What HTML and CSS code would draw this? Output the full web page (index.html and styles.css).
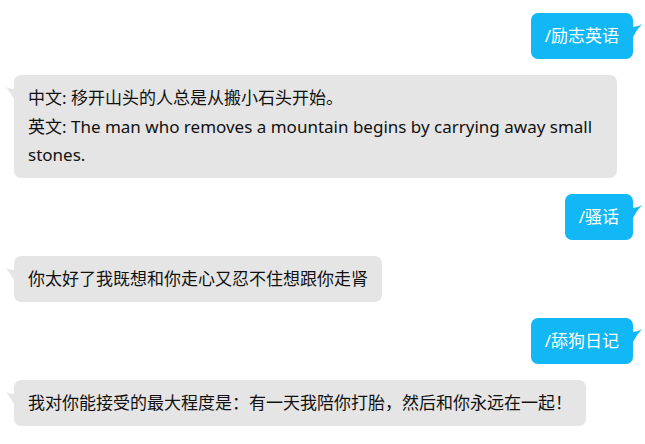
FILE: index.html
```html
<!DOCTYPE html>
<html lang="zh-CN">
<head>
<meta charset="utf-8">
<title>Chat</title>
<link rel="stylesheet" href="styles.css">
</head>
<body>
<div class="chat">
  <div class="msg msg-out">/励志英语</div>
  <div class="msg msg-in">中文: 移开山头的人总是从搬小石头开始。<br>英文: The man who removes a mountain begins by carrying away small stones.</div>
  <div class="msg msg-out">/骚话</div>
  <div class="msg msg-in">你太好了我既想和你走心又忍不住想跟你走肾</div>
  <div class="msg msg-out">/舔狗日记</div>
  <div class="msg msg-in">我对你能接受的最大程度是：有一天我陪你打胎，然后和你永远在一起！</div>
</div>
</body>
</html>
```
FILE: styles.css
```css
html, body {
  margin: 0;
  padding: 0;
  background: #ffffff;
}

.chat {
  display: flex;
  flex-direction: column;
  align-items: flex-start;
  gap: 16px;
  padding: 13px 12px 0 14px;
  font-family: "Noto Sans", "Noto Sans CJK SC", sans-serif;
  font-size: 17px;
  line-height: 28.5px;
}

.msg {
  position: relative;
  box-sizing: border-box;
  max-width: 603px;
  padding: 9px 14px 8.5px;
  border-radius: 7px;
}

.msg::after {
  content: "";
  position: absolute;
  top: 11px;
  width: 9px;
  height: 13px;
}

.msg-out {
  align-self: flex-end;
  background: #12b7f5;
  color: #ffffff;
}

.msg-out::after {
  right: -9px;
  background: #12b7f5;
  clip-path: path("M0 3 Q5 3 9 0 Q4 5 0 13 Z");
}

.msg-in {
  align-self: flex-start;
  background: #e5e5e5;
  color: #111111;
}

.msg-in::after {
  left: -8px;
  background: #e5e5e5;
  clip-path: path("M8 3 Q3 3 0 1 Q4 6 8 13 Z");
}
```
